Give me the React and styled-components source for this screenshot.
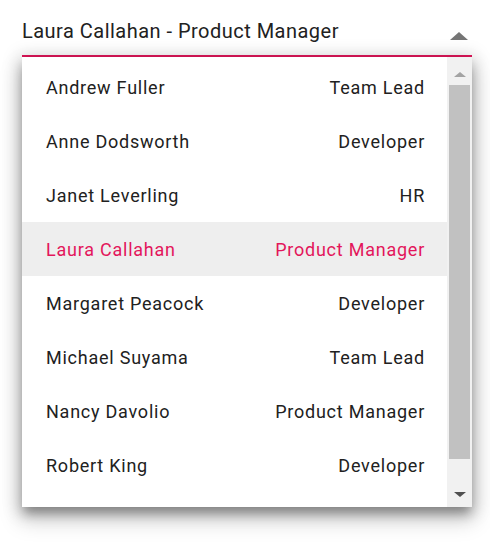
import React from "react";
import styled, { createGlobalStyle } from "styled-components";

const employees = [
  { name: "Andrew Fuller", role: "Team Lead" },
  { name: "Anne Dodsworth", role: "Developer" },
  { name: "Janet Leverling", role: "HR" },
  { name: "Laura Callahan", role: "Product Manager" },
  { name: "Margaret Peacock", role: "Developer" },
  { name: "Michael Suyama", role: "Team Lead" },
  { name: "Nancy Davolio", role: "Product Manager" },
  { name: "Robert King", role: "Developer" },
];

const selected = "Laura Callahan";

const Global = createGlobalStyle`
  body {
    margin: 0;
    background: #fff;
    font-family: Roboto, "Liberation Sans", sans-serif;
  }
`;

const Page = styled.div`
  padding: 14px 18px 40px 22px;
  width: 450px;
`;

const Field = styled.div`
  display: flex;
  align-items: center;
  justify-content: space-between;
  border-bottom: 2px solid #e3165b;
  box-sizing: border-box;
  height: 43px;
`;

const Value = styled.div`
  font-size: 20px;
  letter-spacing: 0.48px;
  color: #212121;
  padding-bottom: 8px;
`;

const Caret = styled.div`
  width: 0;
  height: 0;
  border-left: 9px solid transparent;
  border-right: 9px solid transparent;
  border-bottom: 8px solid #757575;
  margin-right: 4px;
  margin-top: 2px;
`;

const Popup = styled.div`
  display: flex;
  height: 450px;
  background: #fff;
  box-shadow: 0 8px 10px -2px rgba(0, 0, 0, 0.3), 0 12px 20px 2px rgba(0, 0, 0, 0.18),
    0 2px 16px 4px rgba(0, 0, 0, 0.15);
`;

const List = styled.ul`
  flex: 1;
  list-style: none;
  margin: 0;
  padding: 3px 0 0;
`;

const Row = styled.li`
  display: flex;
  justify-content: space-between;
  align-items: center;
  height: 54px;
  padding: 0 22px 0 24px;
  font-size: 18px;
  letter-spacing: 0.76px;
  color: ${(p) => (p.$active ? "#e3165b" : "#212121")};
  background: ${(p) => (p.$active ? "#eeeeee" : "transparent")};
`;

const Track = styled.div`
  width: 25px;
  background: #f1f1f1;
  display: flex;
  flex-direction: column;
  align-items: center;
  padding: 15px 0 10px;
  box-sizing: border-box;
`;

const Arrow = styled.div`
  width: 0;
  height: 0;
  border-left: 6px solid transparent;
  border-right: 6px solid transparent;
  ${(p) =>
    p.$down
      ? "border-top: 5px solid #505050;"
      : "border-bottom: 5px solid #a3a3a3;"}
`;

const Thumb = styled.div`
  width: 21px;
  height: 374px;
  background: #c1c1c1;
  margin: 8px 0 0;
`;

const Spacer = styled.div`
  flex: 1;
`;

export default function App() {
  return (
    <Page>
      <Global />
      <Field>
        <Value>Laura Callahan - Product Manager</Value>
        <Caret />
      </Field>
      <Popup>
        <List>
          {employees.map((e) => (
            <Row key={e.name} $active={e.name === selected}>
              <span>{e.name}</span>
              <span>{e.role}</span>
            </Row>
          ))}
        </List>
        <Track>
          <Arrow />
          <Thumb />
          <Spacer />
          <Arrow $down />
        </Track>
      </Popup>
    </Page>
  );
}
